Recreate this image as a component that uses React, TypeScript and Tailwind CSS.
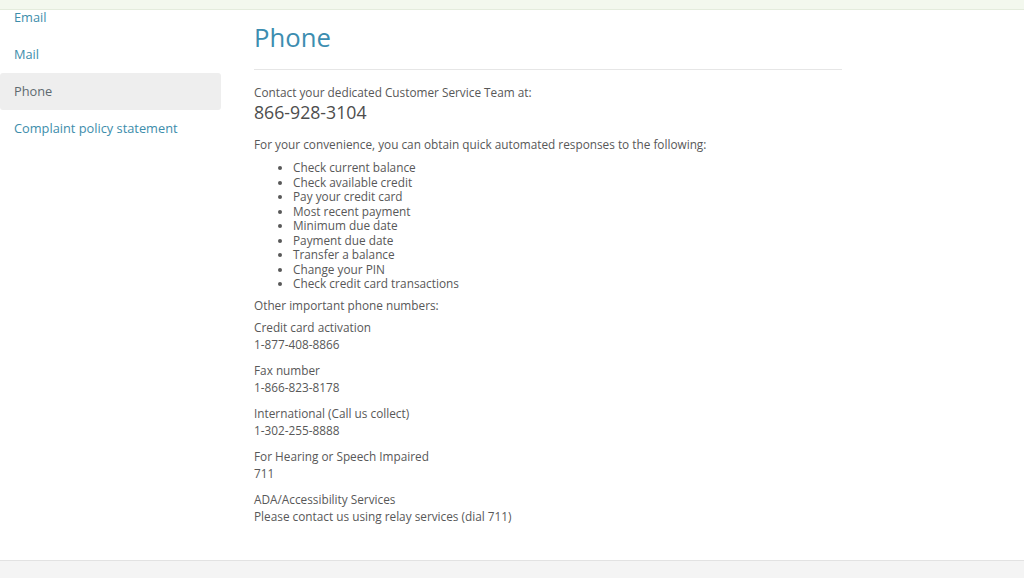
import React from "react";

const items = [
  "Check current balance",
  "Check available credit",
  "Pay your credit card",
  "Most recent payment",
  "Minimum due date",
  "Payment due date",
  "Transfer a balance",
  "Change your PIN",
  "Check credit card transactions",
];

const groups: [string, string][] = [
  ["Credit card activation", "1-877-408-8866"],
  ["Fax number", "1-866-823-8178"],
  ["International (Call us collect)", "1-302-255-8888"],
  ["For Hearing or Speech Impaired", "711"],
  ["ADA/Accessibility Services", "Please contact us using relay services (dial 711)"],
];

export default function App() {
  return (
    <div
      className="w-[1024px] h-[578px] flex flex-col bg-white overflow-hidden"
      style={{ fontFamily: '"Open Sans", "Liberation Sans", sans-serif' }}
    >
      <div className="h-[10px] shrink-0 bg-[#f3f8ee] border-b border-[#e4ecdd]" />
      <div className="flex-1 flex overflow-hidden">
        <nav className="w-[221px] shrink-0 -mt-[11px] flex flex-col">
          {["Email", "Mail", "Phone", "Complaint policy statement"].map((t) => (
            <div
              key={t}
              className={`h-[37px] flex items-center pl-[14px] text-[12.8px] rounded-[3px] ${
                t === "Phone" ? "bg-[#eeeeee] text-[#5e6a70]" : "text-[#3d8dab]"
              }`}
            >
              {t}
            </div>
          ))}
        </nav>
        <main className="ml-[33px] w-[588px] text-[11.8px] text-[#585858]">
          <h1 className="mt-[10px] text-[25.7px] leading-[36px] text-[#3c8db0] font-normal">Phone</h1>
          <div className="mt-[13px] border-t border-[#e6e6e6]" />
          <p className="mt-[14px] leading-[17px]">Contact your dedicated Customer Service Team at:</p>
          <p className="text-[17.7px] leading-[22px] text-[#4d4d4d]">866-928-3104</p>
          <p className="mt-[13px] leading-[17px]">
            For your convenience, you can obtain quick automated responses to the following:
          </p>
          <ul className="mt-[7px] pl-[39px] list-disc">
            {items.map((i) => (
              <li key={i} className="leading-[14.5px]">
                {i}
              </li>
            ))}
          </ul>
          <p className="mt-[6px] leading-[17px]">Other important phone numbers:</p>
          <div className="mt-[5px] flex flex-col gap-[9px]">
            {groups.map(([a, b]) => (
              <div key={a} className="leading-[17px]">
                <div>{a}</div>
                <div>{b}</div>
              </div>
            ))}
          </div>
        </main>
      </div>
      <div className="h-[18px] shrink-0 bg-[#f4f4f4] border-t border-[#e2e2e2]" />
    </div>
  );
}
